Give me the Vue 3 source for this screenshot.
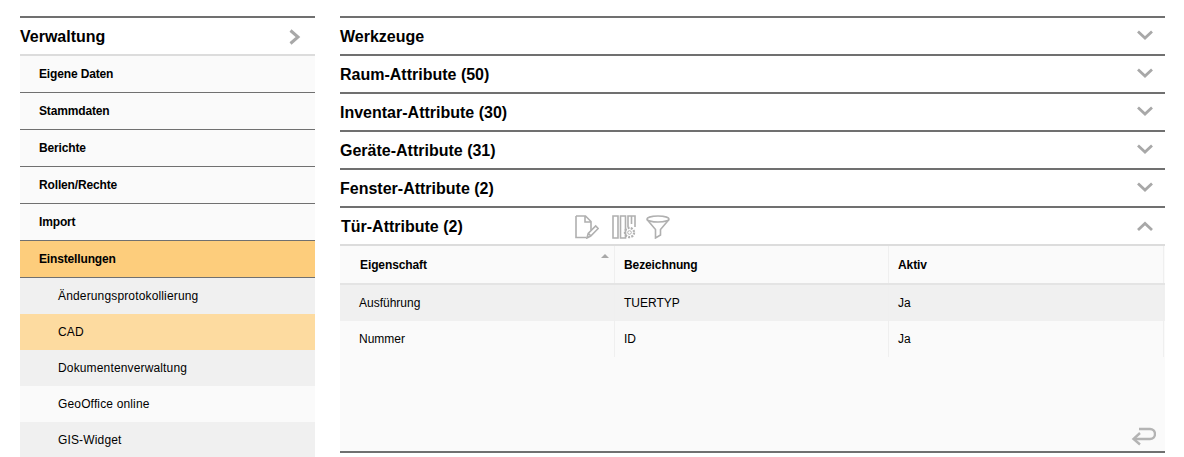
<template>
  <div class="page">
    <aside class="sidebar">
      <div class="side-head">
        <span>Verwaltung</span>
        <svg width="12" height="16" viewBox="0 0 12 16" fill="none">
          <path d="M1.5 1.5L9 8l-7.500 6.500" stroke="#a8a8a8" stroke-width="3"/>
        </svg>
      </div>
      <div
        v-for="item in menu"
        :key="item"
        class="side-item"
        :class="{ active: item === 'Einstellungen' }"
      >
        {{ item }}
      </div>
      <div
        v-for="(sub, i) in subMenu"
        :key="sub"
        class="side-sub"
        :class="{ alt: i === 3, active: sub === 'CAD' }"
      >
        {{ sub }}
      </div>
    </aside>

    <main class="content">
      <div v-for="section in sections" :key="section" class="section">
        <span>{{ section }}</span>
        <svg class="down" width="16" height="11" viewBox="0 0 16 11" fill="none">
          <path d="M1 1.500L8 8l7-6.500" stroke="#a8a8a8" stroke-width="2.800"/>
        </svg>
      </div>

      <div class="section open">
        <span class="open-title">Tür-Attribute (2)</span>
        <div class="tools">
          <svg width="24" height="24" viewBox="0 0 24 24" fill="none" stroke="#b0b0b0" stroke-width="1.600">
            <path d="M1 1h9.500L16 6.500V15M10 1v6h6M1 1v21.500h10.500"/>
            <path d="M12 23l1.200-4.500 7.500-7.500 2.500 2.500-7.500 7.500zM13.500 18.500l2.500 2.500"/>
          </svg>
          <svg class="tool-columns" width="24" height="24" viewBox="0 0 24 24" fill="none" stroke="#b0b0b0" stroke-width="1.600">
            <path d="M1 1h5v22H1zM8.500 1h5v22h-5zM16 12V1h3.500v8M23 12V1h-3.500"/>
            <circle cx="17.500" cy="17.500" r="4.600" stroke-dasharray="2 1.200" stroke-width="2.200"/>
            <circle cx="17.500" cy="17.500" r="1.800" stroke-width="1"/>
          </svg>
          <svg width="24" height="24" viewBox="0 0 24 24" fill="none" stroke="#b0b0b0" stroke-width="1.600">
            <ellipse cx="12" cy="4" rx="11" ry="3"/>
            <path d="M1 4.500l8.500 10v8.500l5-3v-5.500l8.500-10"/>
          </svg>
        </div>
        <svg class="open-arrow" width="16" height="11" viewBox="0 0 16 11" fill="none">
          <path d="M1 9l7-6.500L15 9" stroke="#a8a8a8" stroke-width="2.800"/>
        </svg>
      </div>

      <div class="panel">
        <div class="row head">
          <div class="cell first">Eigenschaft<i class="sort"></i></div>
          <div class="cell">Bezeichnung</div>
          <div class="cell last">Aktiv</div>
        </div>
        <div v-for="(row, i) in rows" :key="row[0]" class="row" :class="{ striped: i === 0 }">
          <div class="cell first">{{ row[0] }}</div>
          <div class="cell">{{ row[1] }}</div>
          <div class="cell last">{{ row[2] }}</div>
        </div>
        <svg class="back" width="25" height="19" viewBox="0 0 25 19" fill="none" stroke="#b4b4b4" stroke-width="2.400">
          <path d="M8 2h11a5 5 0 0 1 0 10H3"/>
          <path d="M9 6L2.500 12 9 17.500"/>
        </svg>
      </div>
    </main>
  </div>
</template>

<script setup>
const menu = ['Eigene Daten', 'Stammdaten', 'Berichte', 'Rollen/Rechte', 'Import', 'Einstellungen']
const subMenu = ['Änderungsprotokollierung', 'CAD', 'Dokumentenverwaltung', 'GeoOffice online', 'GIS-Widget']
const sections = [
  'Werkzeuge',
  'Raum-Attribute (50)',
  'Inventar-Attribute (30)',
  'Geräte-Attribute (31)',
  'Fenster-Attribute (2)'
]
const rows = [
  ['Ausführung', 'TUERTYP', 'Ja'],
  ['Nummer', 'ID', 'Ja']
]
</script>

<style>
html,
body {
  margin: 0;
  overflow: hidden;
  background: #fff;
}
</style>

<style scoped>
.page {
  display: flex;
  gap: 25px;
  height: 457px;
  padding: 16px 19px 0 20px;
  box-sizing: border-box;
  overflow: hidden;
  font-family: "Liberation Sans", Arial, sans-serif;
  color: #000;
}

.sidebar {
  width: 295px;
  flex: none;
}

.side-head {
  display: flex;
  align-items: center;
  justify-content: space-between;
  height: 34px;
  padding: 2px 14px 0 0;
  border-top: 2px solid #707070;
  border-bottom: 2px solid #dcdcdc;
  font-size: 16px;
  font-weight: bold;
}

.side-item {
  height: 36px;
  line-height: 36px;
  padding-left: 19px;
  background: #fafafa;
  border-bottom: 1px solid #707070;
  font-size: 12px;
  font-weight: bold;
  letter-spacing: -0.15px;
}

.side-item.active {
  background: #fdcd7c;
}

.side-sub {
  height: 36px;
  line-height: 36px;
  padding-left: 38px;
  background: #f0f0f0;
  font-size: 12px;
  letter-spacing: 0.15px;
}

.side-sub.alt {
  background: #fafafa;
}

.side-sub.active {
  background: #fddba0;
}

.content {
  flex: 1;
  min-width: 0;
}

.section {
  display: flex;
  align-items: center;
  justify-content: space-between;
  height: 34px;
  padding: 2px 12px 0 0;
  border-top: 2px solid #707070;
  font-size: 16px;
  font-weight: bold;
}

.down {
  margin-top: -3px;
}

.section.open {
  justify-content: flex-start;
  border-bottom: 2px solid #dcdcdc;
}

.open-title {
  width: 234px;
  padding-left: 1px;
}

.tools {
  display: flex;
  gap: 10px;
  align-items: center;
  margin-top: -1px;
}

.tool-columns {
  margin-left: 3px;
}

.open-arrow {
  margin-left: auto;
  margin-top: -2px;
}

.panel {
  position: relative;
  height: 205px;
  background: #fafafa;
  border-bottom: 2px solid #707070;
}

.row {
  display: grid;
  grid-template-columns: 275px 274px 1fr;
  height: 36px;
  font-size: 12px;
}

.row.head {
  height: 37px;
  border-bottom: 2px solid #e4e4e4;
  font-weight: bold;
  letter-spacing: -0.1px;
}

.row.striped {
  background: #f0f0f0;
}

.cell {
  position: relative;
  display: flex;
  align-items: center;
  padding-left: 9px;
  border-right: 1px solid #efefef;
}

.cell.first {
  padding-left: 19px;
}

.row.head .cell.first {
  padding-left: 20px;
}

.cell.last {
  margin-right: 1px;
}

.sort {
  position: absolute;
  top: 8px;
  right: 5px;
  border-left: 4px solid transparent;
  border-right: 4px solid transparent;
  border-bottom: 4px solid #a8a8a8;
}

.back {
  position: absolute;
  right: 9px;
  bottom: 5px;
}
</style>
